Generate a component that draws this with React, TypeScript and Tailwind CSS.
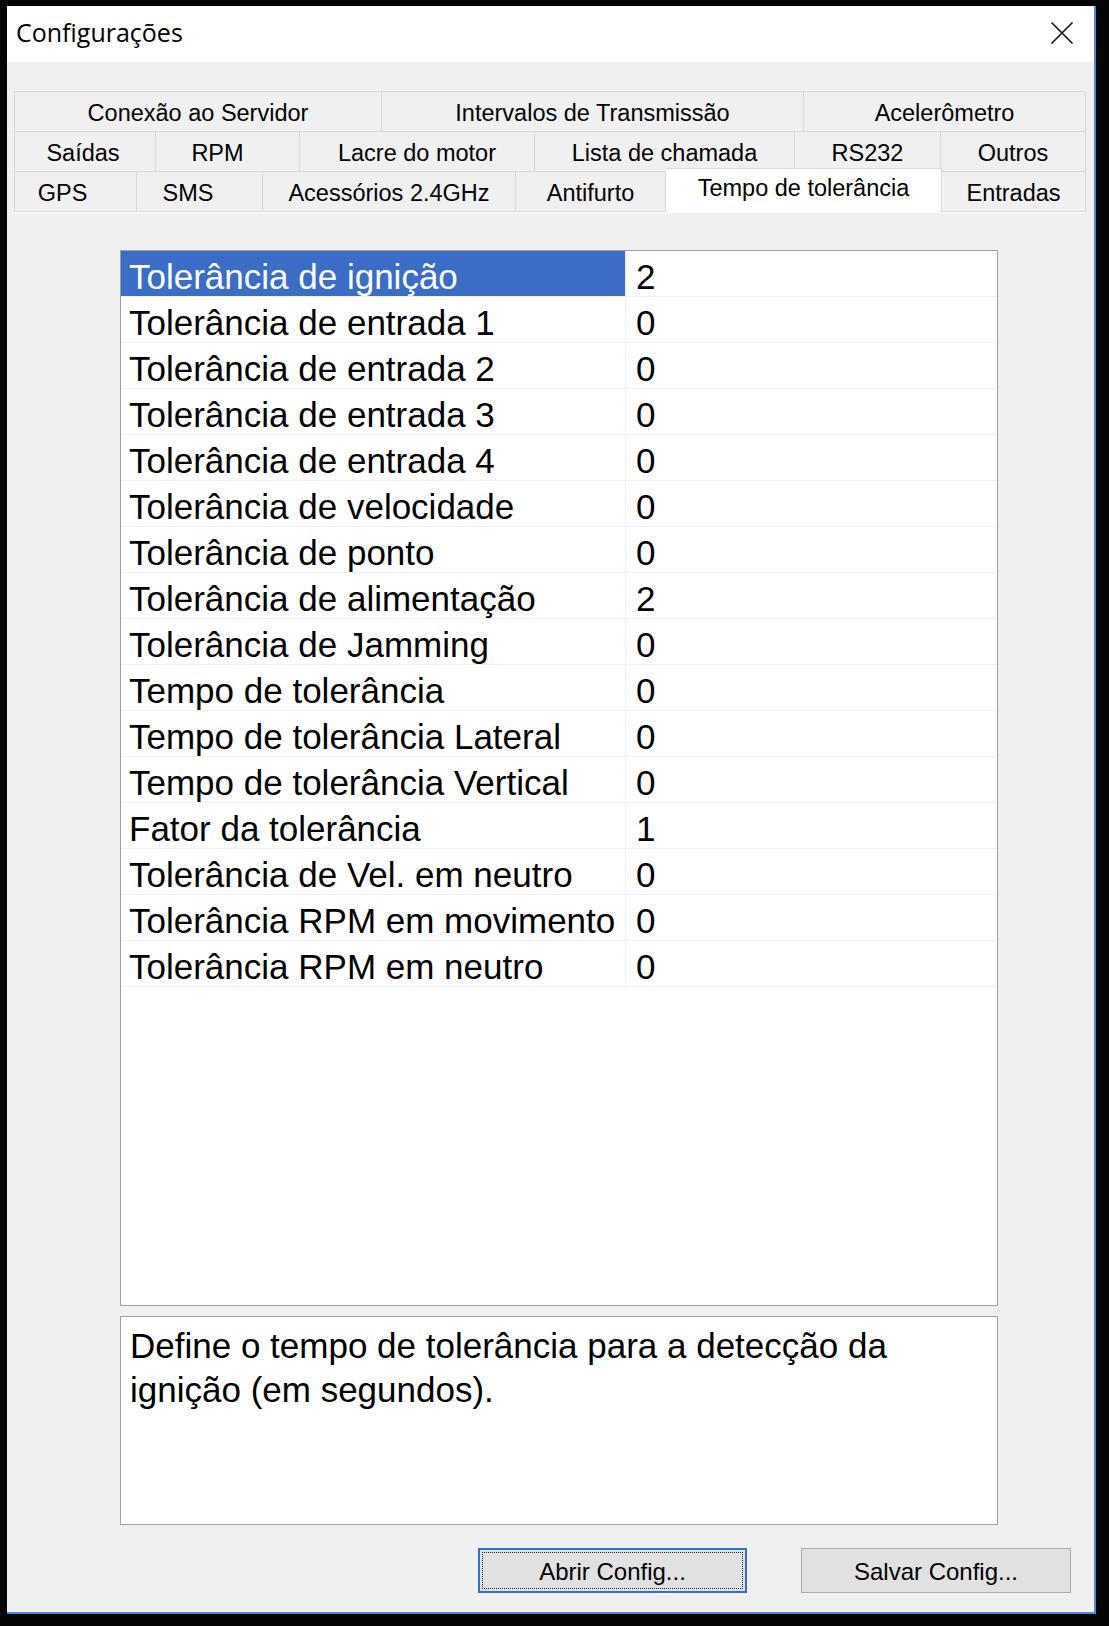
const ativa = "Tempo de tolerância";

// linhas de abas: nome, largura e recuo do texto
const abas: [string, string][][] = [
  [
    ["Conexão ao Servidor", "w-[368px]"],
    ["Intervalos de Transmissão", "w-[422px]"],
    ["Acelerômetro", "w-[282px]"],
  ],
  [
    ["Saídas", "w-[142px] pr-[4px]"],
    ["RPM", "w-[144px] pr-[20px]"],
    ["Lacre do motor", "w-[235px]"],
    ["Lista de chamada", "w-[260px]"],
    ["RS232", "w-[146px]"],
    ["Outros", "w-[145px]"],
  ],
  [
    ["GPS", "w-[123px] pr-[26px]"],
    ["SMS", "w-[126px] pr-[23px]"],
    ["Acessórios 2.4GHz", "w-[253px]"],
    ["Antifurto", "w-[150px]"],
    ["Tempo de tolerância", "w-[276px]"],
    ["Entradas", "w-[144px]"],
  ],
];

const propriedades: [string, string][] = [
  ["Tolerância de ignição", "2"],
  ["Tolerância de entrada 1", "0"],
  ["Tolerância de entrada 2", "0"],
  ["Tolerância de entrada 3", "0"],
  ["Tolerância de entrada 4", "0"],
  ["Tolerância de velocidade", "0"],
  ["Tolerância de ponto", "0"],
  ["Tolerância de alimentação", "2"],
  ["Tolerância de Jamming", "0"],
  ["Tempo de tolerância", "0"],
  ["Tempo de tolerância Lateral", "0"],
  ["Tempo de tolerância Vertical", "0"],
  ["Fator da tolerância", "1"],
  ["Tolerância de Vel. em neutro", "0"],
  ["Tolerância RPM em movimento", "0"],
  ["Tolerância RPM em neutro", "0"],
];

function Fechar() {
  return (
    <svg width="24" height="24" viewBox="0 0 24 24" className="text-[#111]">
      <path d="M1.5 1.5 L22.5 22.5 M22.5 1.5 L1.5 22.5" stroke="currentColor" strokeWidth="1.6" fill="none" />
    </svg>
  );
}

export default function App() {
  const selecionada = 0;

  return (
    <div className="h-[1626px] w-[1109px] bg-[#050505] pl-[7px] pt-[6px] font-['Liberation_Sans',Arial,sans-serif] text-black">
      <div className="flex h-[1608px] w-[1089px] flex-col border-b-2 border-r-2 border-[#4b8bd0] bg-[#f0f0f0]">
        {/* barra de título */}
        <div className="flex h-[56px] shrink-0 items-center justify-between bg-white pb-[2px] pl-[9px] pr-[20px]">
          <span className="font-['Open_Sans',sans-serif] text-[25px]">Configurações</span>
          <Fechar />
        </div>

        {/* abas */}
        <div className="ml-[7px] mt-[29px] w-[1072px] border-t border-[#d9d9d9] text-[23.5px]">
          {abas.map((linha, i) => (
            <div key={i} className="flex">
              {linha.map(([nome, largura], j) => {
                const sel = nome === ativa;
                return (
                  <div
                    key={nome}
                    className={`${largura} flex items-center justify-center border-r border-[#d9d9d9] ${
                      j === 0 ? "border-l" : ""
                    } ${
                      sel
                        ? "-mt-[4px] h-[44px] border-t bg-white pb-[4px]"
                        : "h-[40px] border-b pt-[4px]"
                    }`}
                  >
                    {nome}
                  </div>
                );
              })}
            </div>
          ))}
        </div>

        {/* painel */}
        <div className="ml-[7px] w-[1072px] border-t border-white" />

        <div className="ml-[113px] mt-[37px] h-[1056px] w-[878px] shrink-0 border border-[#a0a0a0] bg-white">
          {propriedades.map(([nome, valor], i) => (
            <div key={nome} className="flex h-[46px] border-b border-[#f0f0f0] text-[35px] leading-[39px]">
              <div
                className={`w-[505px] shrink-0 border-r border-[#f0f0f0] pl-[8px] pt-[6px] ${
                  i === selecionada ? "bg-[#3b6dc7] text-white" : ""
                }`}
              >
                {nome}
              </div>
              <div className="pl-[10px] pt-[6px]">{valor}</div>
            </div>
          ))}
        </div>

        <div className="ml-[113px] mt-[10px] h-[209px] w-[878px] shrink-0 border border-[#a0a0a0] bg-white pl-[9px] pt-[7px] text-[35px] leading-[44px]">
          Define o tempo de tolerância para a detecção da
          <br />
          ignição (em segundos).
        </div>

        {/* botões */}
        <div className="mt-[23px] flex justify-end gap-[54px] pr-[23px] text-[24px]">
          <button className="relative flex h-[45px] w-[269px] items-center justify-center border-2 border-[#2f73c2] bg-[#e1e1e1] pt-[3px]">
            <span className="absolute inset-[2px] border border-dotted border-[#222]" />
            Abrir Config...
          </button>
          <button className="flex h-[45px] w-[270px] items-center justify-center border border-[#adadad] bg-[#e1e1e1] pt-[3px]">
            Salvar Config...
          </button>
        </div>
      </div>
    </div>
  );
}
